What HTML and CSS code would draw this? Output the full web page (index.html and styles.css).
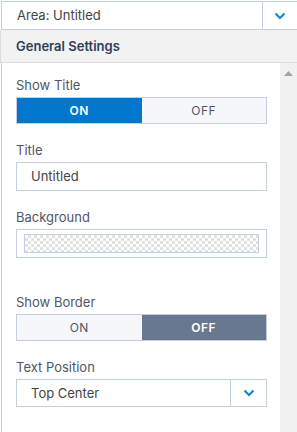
FILE: index.html
```html
<!DOCTYPE html>
<html lang="en">
<head>
    <meta charset="UTF-8">
    <meta name="viewport" content="width=device-width, initial-scale=1.0">
    <title>Area Settings</title>
    <link rel="stylesheet" href="styles.css">
</head>
<body>

<!-- Area picker -->
<div class="area-select">
    <div class="area-value">Area: Untitled</div>
    <div class="area-arrow">
        <svg width="12" height="8" viewBox="0 0 12 8"><path d="M1.5 1.5 L6 6 L10.5 1.5" fill="none" stroke="#1a86d0" stroke-width="2.2"/></svg>
    </div>
</div>

<!-- Section header -->
<div class="section-head">General Settings</div>

<!-- Settings panel -->
<div class="panel">
    <div class="panel-body">
        <div class="field">
            <label>Show Title</label>
            <div class="toggle">
                <span class="opt on-active">ON</span>
                <span class="opt">OFF</span>
            </div>
        </div>

        <div class="field">
            <label>Title</label>
            <div class="text-input">Untitled</div>
        </div>

        <div class="field">
            <label>Background</label>
            <div class="swatch-input"><div class="swatch"></div></div>
        </div>

        <div class="field spaced">
            <label>Show Border</label>
            <div class="toggle">
                <span class="opt">ON</span>
                <span class="opt off-active">OFF</span>
            </div>
        </div>

        <div class="field">
            <label>Text Position</label>
            <div class="select">
                <div class="select-value">Top Center</div>
                <div class="select-arrow">
                    <svg width="12" height="8" viewBox="0 0 12 8"><path d="M1.5 1.5 L6 6 L10.5 1.5" fill="none" stroke="#1a86d0" stroke-width="2.2"/></svg>
                </div>
            </div>
        </div>
    </div>
    <div class="scrollbar">
        <svg width="9" height="5" viewBox="0 0 9 5"><path d="M0 5 L4.5 0 L9 5 Z" fill="#a3a3a3"/></svg>
    </div>
</div>

</body>
</html>
```

FILE: styles.css
```css
/* Global */
* {
    margin: 0;
    padding: 0;
    box-sizing: border-box;
}

body {
    font-family: Inter, 'Noto Sans', sans-serif;
    font-size: 13px;
    color: #4d5769;
    background-color: #fff;
    width: 297px;
    height: 432px;
    overflow: hidden;
}

/* Area picker */
.area-select {
    display: flex;
    height: 29px;
    margin: 1px 0 0 1px;
    border: 1px solid #c3cfdf;
    border-right: none;
}

.area-value {
    flex: 1;
    padding-left: 15px;
    line-height: 27px;
    color: #444;
}

.area-arrow {
    width: 35px;
    border-left: 1px solid #c3cfdf;
    display: flex;
    align-items: center;
    justify-content: center;
}

/* Section header */
.section-head {
    height: 33px;
    background-color: #f2f2f2;
    border-left: 1px solid #dcdcdc;
    border-bottom: 1px solid #dcdcdc;
    padding-left: 15px;
    line-height: 32px;
    font-weight: 600;
    color: #2f3d57;
}

/* Panel */
.panel {
    display: flex;
    height: 369px;
    margin-left: 1px;
    border-left: 1px solid #c3cfdf;
}

.panel-body {
    flex: 1;
    padding: 14px 13px 0 14px;
}

.scrollbar {
    width: 17px;
    background-color: #f1f1f1;
    display: flex;
    justify-content: center;
    padding-top: 8px;
}

.field {
    margin-bottom: 18px;
}

.field.spaced {
    margin-top: 36px;
}

.field label {
    display: block;
    line-height: 16px;
    margin-bottom: 4px;
}

/* Toggle */
.toggle {
    display: flex;
    height: 27px;
    border: 1px solid #c3cfdf;
    background-color: #f5f7fa;
}

.toggle .opt {
    flex: 1;
    text-align: center;
    line-height: 25px;
    font-size: 12px;
    letter-spacing: 0.5px;
    color: #4d5769;
}

.toggle .on-active {
    background-color: #0077cc;
    color: #fff;
    font-weight: 600;
}

.toggle .off-active {
    background-color: #687891;
    color: #fff;
    font-weight: 600;
}

/* Inputs */
.text-input {
    height: 29px;
    border: 1px solid #c3cfdf;
    padding-left: 14px;
    line-height: 27px;
    color: #444;
}

.swatch-input {
    height: 29px;
    border: 1px solid #c3cfdf;
    padding: 4px 7px;
}

.swatch {
    height: 19px;
    border: 1px solid #c3cfdf;
    background-color: #fff;
    background-image:
        linear-gradient(45deg, #e2e2e2 25%, transparent 25%, transparent 75%, #e2e2e2 75%),
        linear-gradient(45deg, #e2e2e2 25%, transparent 25%, transparent 75%, #e2e2e2 75%);
    background-size: 6px 6px;
    background-position: 0 0, 3px 3px;
}

/* Select */
.select {
    display: flex;
    height: 28px;
    border: 1px solid #c3cfdf;
}

.select-value {
    flex: 1;
    padding-left: 14px;
    line-height: 26px;
    color: #444;
}

.select-arrow {
    width: 36px;
    border-left: 1px solid #c3cfdf;
    display: flex;
    align-items: center;
    justify-content: center;
}
```
